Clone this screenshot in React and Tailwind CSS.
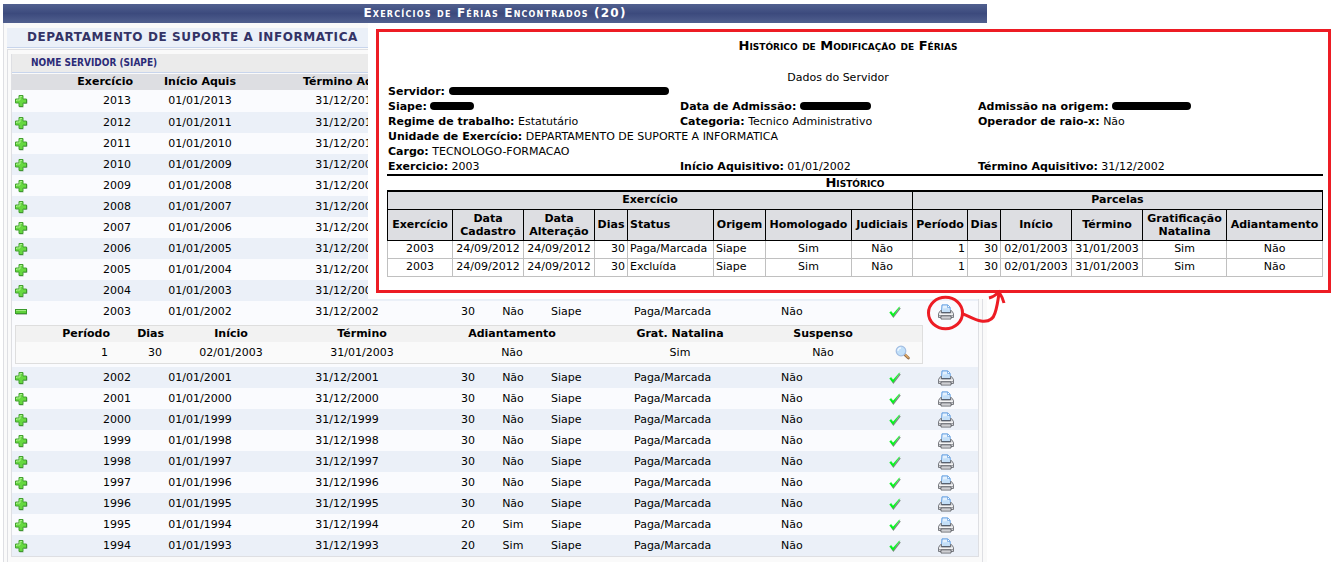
import React from "react";

const EARLY = [2013, 2012, 2011, 2010, 2009, 2008, 2007, 2006, 2005, 2004].map((year) => ({
  year,
  start: year === 2013 ? 2013 : year - 1,
}));

const LATE = [2002, 2001, 2000, 1999, 1998, 1997, 1996, 1995, 1994].map((year) => ({
  year,
  start: year - 1,
  days: year < 1996 ? 20 : 30,
  court: year < 1996 ? "Sim" : "Não",
}));

function PlusIcon() {
  return (
    <svg width="14" height="14" viewBox="0 0 14 14" className="block" aria-hidden="true">
      <path d="M5 1.5h4V5h3.5v4H9v3.5H5V9H1.5V5H5z" fill="#66d840" stroke="#44a032" strokeLinejoin="round" />
      <path d="M6 2.5h2M6 2.5V6H2.5v1" fill="none" stroke="#aaf08a" />
      <path d="M9.5 13H5.5M13 5.5v4H9.6" fill="none" stroke="#2d6e2a" strokeOpacity="0.4" />
    </svg>
  );
}

function MinusIcon() {
  return (
    <svg width="14" height="14" viewBox="0 0 14 14" className="block" aria-hidden="true">
      <rect x="1.5" y="4.5" width="11" height="4" fill="#5fd13a" stroke="#3a9a2b" />
      <path d="M2 5.5h10" stroke="#a2ea84" />
      <path d="M2 9.5h11" stroke="#6c8a68" strokeOpacity="0.5" />
    </svg>
  );
}

function CheckIcon() {
  return (
    <svg width="12" height="12" viewBox="0 0 12 12" className="inline-block" role="img" aria-label="Homologado">
      <path d="M2 7.4 4.4 10.8 11.2 2" fill="none" stroke="#7d8a80" strokeWidth="1.3" />
      <path d="M.6 6.6 2.2 5.4 4 8 10.6.8 4.1 10.4z" fill="#00f51a" stroke="#00f51a" strokeWidth=".5" />
    </svg>
  );
}

function PrinterIcon() {
  return (
    <svg width="16" height="16" viewBox="0 0 16 16" className="block" aria-hidden="true">
      <path d="M3.5 8.5 4 .9h5.8l2.2 2.2.4 5.4z" fill="#e4f1fd" stroke="#5a9ae0" />
      <path d="M5 4.5 10.5 4l.8 4H4.6z" fill="#c3dff8" />
      <path d="M9.5 1v2.5h2.5" fill="#fff" stroke="#5a9ae0" strokeWidth=".7" />
      <path d="M2.6 6.5h.9V9h9V6.5h.9L15.5 9.4v4.1H.5V9.4z" fill="#d3d4d8" stroke="#6d6f75" strokeWidth=".9" strokeLinejoin="round" />
      <path d="M3.5 8.7h9" stroke="#565962" strokeWidth="1" />
      <path d="M1.2 10.2h13.6" stroke="#fff" strokeWidth="1.1" />
      <path d="M1 11.5h14" stroke="#8e9096" strokeWidth=".8" />
      <path d="M3 12h10v3H3z" fill="#f6f6f7" stroke="#55575d" strokeWidth=".9" />
      <path d="M4 13.5h8" stroke="#c5c6ca" strokeWidth=".8" />
    </svg>
  );
}

function MagnifierIcon() {
  return (
    <svg width="16" height="16" viewBox="0 0 16 16" className="block" aria-hidden="true">
      <path d="m9.6 9.4 3.8 3.6" stroke="#96704a" strokeWidth="2.8" strokeLinecap="round" />
      <path d="m10.4 9.8 2.8 2.7" stroke="#dfa763" strokeWidth="1.4" strokeLinecap="round" />
      <circle cx="6" cy="6" r="4.8" fill="#c2e0f9" stroke="#a3bee2" strokeWidth="1.2" />
      <path d="M3 6a3 3 0 0 1 3-3" fill="none" stroke="#eef7ff" strokeWidth="1.3" />
    </svg>
  );
}

function ExerciseRow({ year, start, days, court, open, striped, tall }) {
  const known = days !== undefined;
  return (
    <tr className={(striped ? "bg-[#ebf0f8]" : "bg-[#fafbfe]") + (tall ? " h-[22px]" : " h-[21px]")}>
      <td className="pl-[2px]">
        <button type="button" aria-label={(open ? "Recolher " : "Expandir ") + year} className="block">
          {open ? <MinusIcon /> : <PlusIcon />}
        </button>
      </td>
      <td className="pr-[2px] text-right">{year}</td>
      <td className="text-center">01/01/{start}</td>
      <td className="text-center">31/12/{start}</td>
      <td className="text-right">{days}</td>
      <td className="text-center">{court}</td>
      <td>{known && "Siape"}</td>
      <td>{known && "Paga/Marcada"}</td>
      <td>{known && "Não"}</td>
      <td className="text-center">{known && <CheckIcon />}</td>
      <td>
        {known && (
          <button type="button" aria-label={"Imprimir " + year} className="mx-auto block">
            <PrinterIcon />
          </button>
        )}
      </td>
    </tr>
  );
}

function InstallmentTable() {
  return (
    <div className="mt-[3px] mr-[55px] mb-[3px] ml-[3px] border border-[#dedede] bg-[#fafafa]">
      <table className="w-full table-fixed">
        <colgroup>
          <col className="w-[94px]" />
          <col className="w-[54px]" />
          <col className="w-[134px]" />
          <col className="w-[128px]" />
          <col className="w-[172px]" />
          <col />
          <col className="w-[122px]" />
          <col className="w-[38px]" />
        </colgroup>
        <thead>
          <tr className="h-4 bg-[#f2f2f2]">
            <th className="text-right">Período</th>
            <th className="text-right">Dias</th>
            <th>Início</th>
            <th>Término</th>
            <th>Adiantamento</th>
            <th>Grat. Natalina</th>
            <th>Suspenso</th>
            <td></td>
          </tr>
        </thead>
        <tbody>
          <tr className="h-[21px] text-center">
            <td className="pr-[2px] text-right">1</td>
            <td className="pr-[2px] text-right">30</td>
            <td>02/01/2003</td>
            <td>31/01/2003</td>
            <td>Não</td>
            <td>Sim</td>
            <td>Não</td>
            <td>
              <button type="button" aria-label="Visualizar parcela" className="mx-auto block">
                <MagnifierIcon />
              </button>
            </td>
          </tr>
        </tbody>
      </table>
    </div>
  );
}

function ExerciseTable() {
  return (
    <table className="w-full table-fixed">
      <colgroup>
        <col className="w-[24px]" />
        <col className="w-[97px]" />
        <col className="w-[134px]" />
        <col className="w-[160px]" />
        <col className="w-[48px]" />
        <col className="w-[76px]" />
        <col className="w-[83px]" />
        <col />
        <col className="w-[96px]" />
        <col className="w-[36px]" />
        <col className="w-[65px]" />
      </colgroup>
      <thead>
        <tr className="h-4 bg-[#dddee2]">
          <td></td>
          <th className="text-right">Exercício</th>
          <th>Início Aquis</th>
          <th>Término Aquis</th>
          <td colSpan={7}></td>
        </tr>
      </thead>
      <tbody>
        {EARLY.map((row, i) => (
          <ExerciseRow key={row.year} {...row} striped={i % 2 === 1} tall={i === 0} />
        ))}
        <ExerciseRow year={2003} start={2002} days={30} court="Não" open />
        <tr className="bg-[#fafbfe]">
          <td colSpan={11}>
            <InstallmentTable />
          </td>
        </tr>
        {LATE.map((row, i) => (
          <ExerciseRow key={row.year} {...row} striped={i % 2 === 0} />
        ))}
      </tbody>
    </table>
  );
}

function Field({ label, children, className }) {
  return (
    <div className={className}>
      <dt className="inline font-bold">{label}:</dt> <dd className="inline">{children}</dd>
    </div>
  );
}

const HISTORY = ["Paga/Marcada", "Excluída"];

function HistoryTable() {
  return (
    <table className="w-full table-fixed border-collapse border-t-2 border-black whitespace-nowrap">
      <colgroup>
        <col className="w-[65px]" />
        <col className="w-[71px]" />
        <col className="w-[71px]" />
        <col className="w-[33px]" />
        <col className="w-[86px]" />
        <col className="w-[52px]" />
        <col className="w-[86px]" />
        <col className="w-[61px]" />
        <col className="w-[55px]" />
        <col className="w-[33px]" />
        <col className="w-[71px]" />
        <col className="w-[71px]" />
        <col className="w-[84px]" />
        <col />
      </colgroup>
      <thead className="bg-[#dddee2] [&_th]:border [&_th]:border-black">
        <tr className="h-[18px]">
          <th colSpan={8}>Exercício</th>
          <th colSpan={6}>Parcelas</th>
        </tr>
        <tr className="h-[31px] leading-[13px]">
          <th>Exercício</th>
          <th>Data<br />Cadastro</th>
          <th>Data<br />Alteração</th>
          <th>Dias</th>
          <th className="pl-[2px] text-left">Status</th>
          <th>Origem</th>
          <th>Homologado</th>
          <th>Judiciais</th>
          <th>Período</th>
          <th>Dias</th>
          <th>Início</th>
          <th>Término</th>
          <th>Gratificação<br />Natalina</th>
          <th>Adiantamento</th>
        </tr>
      </thead>
      <tbody className="text-center [&_td]:border [&_td]:border-[#c0c0c0]">
        {HISTORY.map((status) => (
          <tr key={status} className="h-[18px]">
            <td>2003</td>
            <td>24/09/2012</td>
            <td>24/09/2012</td>
            <td className="pr-[2px] text-right">30</td>
            <td className="pl-[2px] text-left">{status}</td>
            <td className="pl-[2px] text-left">Siape</td>
            <td>Sim</td>
            <td>Não</td>
            <td className="pr-[2px] text-right">1</td>
            <td className="pr-[2px] text-right">30</td>
            <td>02/01/2003</td>
            <td>31/01/2003</td>
            <td>Sim</td>
            <td>Não</td>
          </tr>
        ))}
      </tbody>
    </table>
  );
}

function HistoryPanel() {
  return (
    <section className="absolute top-[23px] right-0 left-[368px] bg-white pt-[6px] pr-[5px] pb-[6px] pl-2">
      <div className="border-[3px] border-[#ed1c24] pr-[5px] pb-[13px] pl-2">
        <h2 className="pt-[5px] pr-[14px] text-center text-[13px] leading-[18px] font-bold [font-variant:small-caps]">
          Histórico de Modificação de Férias
        </h2>
        <p className="mt-4 pr-[34px] text-center leading-[13px]">Dados do Servidor</p>
        <dl className="grid grid-cols-[292px_298px_1fr] border-b-2 border-black pl-px leading-[15px]">
          <Field label="Servidor" className="col-span-3">
            <span className="inline-block h-2 w-[220px] rounded-full bg-black"></span>
          </Field>
          <Field label="Siape">
            <span className="inline-block h-2 w-11 rounded-full bg-black"></span>
          </Field>
          <Field label="Data de Admissão">
            <span className="inline-block h-2 w-[71px] rounded-full bg-black"></span>
          </Field>
          <Field label="Admissão na origem">
            <span className="inline-block h-2 w-[79px] rounded-full bg-black"></span>
          </Field>
          <Field label="Regime de trabalho">Estatutário</Field>
          <Field label="Categoria">Tecnico Administrativo</Field>
          <Field label="Operador de raio-x">Não</Field>
          <Field label="Unidade de Exercício" className="col-span-3">DEPARTAMENTO DE SUPORTE A INFORMATICA</Field>
          <Field label="Cargo" className="col-span-3">TECNOLOGO-FORMACAO</Field>
          <Field label="Exercicio">2003</Field>
          <Field label="Início Aquisitivo">01/01/2002</Field>
          <Field label="Término Aquisitivo">31/12/2002</Field>
        </dl>
        <h3 className="text-center text-[13px] leading-[14px] font-bold [font-variant:small-caps]">Histórico</h3>
        <HistoryTable />
      </div>
    </section>
  );
}

export default function App() {
  return (
    <div className="relative min-h-screen overflow-hidden bg-white pt-1 pr-[349px] pl-[3px] font-['Verdana','DejaVu_Sans',sans-serif] text-[11px] leading-[14px] text-black">
      <main>
        <h1 className="bg-linear-to-b from-[#51608f] via-[#3c4a7d] to-[#51608f] text-center text-[12px] leading-[19px] font-bold tracking-widest text-white [font-variant:small-caps]">
          Exercícios de Férias Encontrados (20)
        </h1>
        <div className="border-l border-[#dedfe3] bg-[#fafafa] pt-[5px] pr-1 pl-[3px]">
          <h2 className="border-b border-[#c8d5ec] bg-[#ebf0f8] pl-5 text-[12px] leading-[19px] font-bold tracking-wider text-[#333366]">
            DEPARTAMENTO DE SUPORTE A INFORMATICA
          </h2>
          <div className="mt-px border-x border-t border-[#dedfe3] px-[3px] pt-1 pb-[6px]">
            <div className="border-x border-b border-[#dedfe3]">
              <h3 className="mb-px border-b border-[#c8d5ec] bg-[#ebebeb] pl-[19px] font-['DejaVu_Sans_Condensed','DejaVu_Sans',sans-serif] text-[10px] leading-[18px] font-bold text-[#2b2b78]">
                NOME SERVIDOR (SIAPE)
              </h3>
              <ExerciseTable />
            </div>
          </div>
        </div>
      </main>
      <HistoryPanel />
      <svg
        className="pointer-events-none absolute top-[288px] left-[924px]"
        width="84"
        height="46"
        viewBox="0 0 84 46"
        fill="none"
        stroke="#ed1c24"
        strokeWidth="3"
        aria-hidden="true"
      >
        <ellipse cx="21.5" cy="25" rx="17" ry="15.7" />
        <path d="M39 26c6 2 11 6 18 7 7 1 12-1 14-8 2-6 3-12 4-20" />
        <path d="M65 10c4-1 7-3 10-6 2 3 4 7 5 11" />
      </svg>
    </div>
  );
}
